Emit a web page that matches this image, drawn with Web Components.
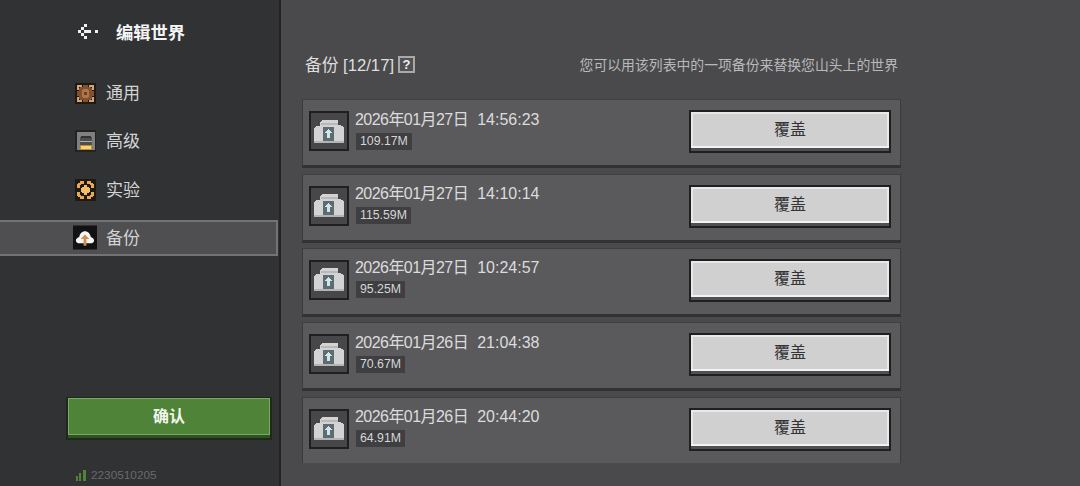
<!DOCTYPE html>
<html lang="zh">
<head>
<meta charset="utf-8">
<title>编辑世界</title>
<style>
    html, body { margin: 0; height: 100%; background: #4a4a4c; overflow: hidden; }
    body { font-family: "Liberation Sans", "Noto Sans CJK SC", sans-serif; }
</style>
</head>
<body>

<template id="icon-general">
    <svg width="21" height="21" viewBox="0 0 21 21" shape-rendering="crispEdges">
        <rect width="21" height="21" fill="#1d1915"/>
        <path d="M8 2h5v2h3v1h1v3h2v5h-2v3h-1v1h-3v2H8v-2H5v-1H4v-3H2V8h2V5h1V4h3z" fill="#84502d"/>
        <path d="M2 2h5v2H4v3H2zM14 2h5v5h-2V4h-3zM2 14h2v3h3v2H2zM17 14h2v5h-5v-2h3z" fill="#d2a476"/>
        <path d="M8 6h5v1h1v7h-1v1H8v-1H7V7h1z" fill="#ad784d"/>
        <rect x="9" y="9" width="3" height="3" fill="#6b3f24"/>
    </svg>
</template>
<template id="icon-advanced">
    <svg width="21" height="22" viewBox="0 0 21 22" shape-rendering="crispEdges">
        <rect width="21" height="22" fill="#232323"/>
        <rect x="2" y="2" width="18" height="18" fill="#808080"/>
        <path d="M6 6h10v1h1v12H5V7h1z" fill="#4e4e4e"/>
        <rect x="6" y="6" width="10" height="2" fill="#333"/>
        <rect x="5" y="11" width="12" height="1" fill="#b0b0b0"/>
        <rect x="5" y="15" width="12" height="5" fill="#c08c38"/>
        <rect x="6" y="16" width="10" height="3" fill="#f5d56e"/>
    </svg>
</template>
<template id="icon-experiment">
    <svg width="21" height="22" viewBox="0 0 21 22" shape-rendering="crispEdges">
        <rect width="21" height="22" fill="#1d1914"/>
        <path d="M5 2h4v3H6v1H5v3H2V5h1V4h2zM12 2h4v2h2v1h1v4h-3V6h-1V5h-3zM2 13h3v3h1v1h3v3H5v-2H3v-1H2zM16 13h3v4h-1v1h-2v2h-4v-3h3v-1h1z" fill="#eaa850"/>
        <path d="M9 6h3v2h2v1h1v4h-1v1h-2v2H9v-2H7v-1H6V9h1V8h2z" fill="#f6bb66"/>
    </svg>
</template>
<template id="icon-backup">
    <svg width="25" height="25" viewBox="0 0 25 25">
        <rect width="25" height="25" fill="#121212"/>
        <path d="M3 15.500c0-1.500 2-3 3.500-3.500C7 8.500 9.500 6 12.500 6s5.500 2.500 6 6c1.500.5 3.500 2 3.500 3.500 0 2-2 3-4 3H7c-2 0-4-1-4-3z" fill="#f6f6f6"/>
        <path d="M12.500 9.500l4.500 4.500h-3v7h-3v-7H8z" fill="#d08f4a"/>
    </svg>
</template>
<template id="icon-chest">
    <svg width="30" height="23" viewBox="0 0 30 23" shape-rendering="crispEdges">
        <path d="M6 2h1V1h1V0h16v5h3v1h2v1h1v16H0V8h1V7h1V6h4z" fill="#d3d3d3"/>
        <rect x="0" y="21" width="30" height="2" fill="#b4b4b4"/>
        <rect x="7" y="3" width="17" height="2" fill="#b8b8b8"/>
        <rect x="9" y="7" width="11" height="14" fill="#5b6c72"/>
        <path d="M14.500 9l3.500 4h-2v5h-3v-5h-2z" fill="#d5e5e7"/>
    </svg>
</template>

<script>
// little helper, every element gets its shadow root the same way
function shadow(el, html) {
    el.attachShadow({ mode: 'open' });
    el.shadowRoot.innerHTML = html;
}

class NavItem extends HTMLElement {
    connectedCallback() {
        shadow(this, `
            <style>
                :host { display: flex; align-items: center; height: 36px; box-sizing: border-box; padding-left: 73px; gap: 9px;
                        font-size: 17px; color: #d4d4d4; }
                :host([active]) { background: #4f4f51; border: 2px solid #737375; border-left: 0; width: 278px; }
                .icon { width: 24px; display: flex; justify-content: center; flex: none; }
                .label { line-height: 20px; padding-top: 2px; }
                svg { display: block; }
            </style>
            <span class="icon"></span><span class="label"><slot></slot></span>
        `);
        const tpl = document.getElementById(this.getAttribute('icon'));
        this.shadowRoot.querySelector('.icon').append(tpl.content.cloneNode(true));
    }
}
customElements.define('nav-item', NavItem);

class GreenButton extends HTMLElement {
    constructor() {
        super();
        shadow(this, `
            <style>
                :host { display: flex; align-items: center; justify-content: center; box-sizing: border-box; height: 43px;
                        margin-left: 66px; width: 206px; background: #4f8337;
                        border: 2px solid #1c2a17; border-top-width: 1px;
                        box-shadow: inset 0 -3px 0 #2f5224, inset 0 -4px 0 #7ea76a, inset 1px 1px 0 #7ea76a, inset -1px 0 0 #7ea76a;
                        padding-bottom: 6px; font-size: 16px; font-weight: 700; color: #f2f5ee; }
            </style>
            <slot></slot>
        `);
    }
}
customElements.define('green-button', GreenButton);

class SideBar extends HTMLElement {
    constructor() {
        super();
        shadow(this, `
            <style>
                :host { display: flex; flex-direction: column; flex: none; width: 279px; height: 486px; box-sizing: content-box;
                        background: #313234; border-right: 2px solid #232325; }
                .title { display: flex; align-items: center; height: 63px; padding-left: 78px; gap: 18px;
                         font-size: 17.300px; font-weight: 700; color: #f4f4f4; }
                svg { display: block; }
                nav { display: flex; flex-direction: column; gap: 12.300px; margin-top: 12px; }
                .bottom { margin-top: auto; }
                .ver { display: flex; align-items: center; gap: 5px; height: 13px; margin: 29px 0 4px; padding-left: 75px;
                       font-size: 11.800px; color: #69696c; line-height: 13px; }
            </style>
            <div class="title">
                <svg width="20" height="15" viewBox="0 0 20 15" shape-rendering="crispEdges" fill="#f0f0f0">
                    <path d="M6 0h3v3H6zM3 3h3v3H3zM0 6h3v3H0zM3 9h3v3H3zM6 12h3v3H6zM6 6h7v3H6z"/><rect x="17" y="6" width="3" height="3"/>
                </svg>
                <span>编辑世界</span>
            </div>
            <nav><slot name="nav"></slot></nav>
            <div class="bottom">
                <slot name="confirm"></slot>
                <div class="ver">
                    <svg width="11" height="11" viewBox="0 0 11 11" fill="#4f8337" shape-rendering="crispEdges"><rect x="1" y="6" width="2" height="5"/><rect x="4" y="3" width="2" height="8"/><rect x="8" y="0" width="3" height="11"/></svg>
                    <slot name="version"></slot>
                </div>
            </div>
        `);
    }
}
customElements.define('side-bar', SideBar);

class BackupRow extends HTMLElement {
    connectedCallback() {
        shadow(this, `
            <style>
                :host { display: flex; align-items: flex-start; flex: none; box-sizing: border-box; height: 69px; padding: 11px 9px 0 6px;
                        background: #5a5a5c; border: 1px solid #3a3a3c; border-top-color: #3f3f41; border-bottom: 3px solid #323234; }
                .thumb { flex: none; width: 40px; height: 40px; box-sizing: border-box; background: #47474a; border: 2px solid #1f1f21;
                         display: flex; align-items: center; justify-content: center; }
                svg { display: block; }
                .info { flex: 1; margin-left: 6px; margin-top: -1.700px; color: #dcdcdc; }
                .stamp { display: flex; gap: 9px; font-size: 16px; line-height: 20px; white-space: pre; }
                .date { letter-spacing: -0.55px; }
                .size { display: inline-block; margin-top: 3px; margin-left: 1px; padding: 0 4px; height: 17px; line-height: 17px;
                        background: #3f3f41; font-size: 12.300px; color: #d6d6d6; }
                .btn { flex: none; width: 202px; height: 43px; margin-top: -1px; box-sizing: border-box; background: #d0d0d0;
                       border: 2px solid #1f1f21;
                       box-shadow: inset 0 -3px 0 #505052, inset 0 -5px 0 #f2f2f2, inset 2px 2px 0 #e8e8e8, inset -2px 0 0 #e8e8e8;
                       display: flex; align-items: center; justify-content: center; padding-bottom: 7px;
                       font-size: 16px; color: #333335; }
            </style>
            <div class="thumb"></div>
            <div class="info">
                <div class="stamp"><span class="date">${this.getAttribute('date')}</span><span>${this.getAttribute('time')}</span></div>
                <span class="size">${this.getAttribute('size')}</span>
            </div>
            <div class="btn"><slot></slot></div>
        `);
        this.shadowRoot.querySelector('.thumb').append(document.getElementById('icon-chest').content.cloneNode(true));
    }
}
customElements.define('backup-row', BackupRow);

class BackupPanel extends HTMLElement {
    constructor() {
        super();
        shadow(this, `
            <style>
                :host { display: flex; flex-direction: column; flex: 1; min-width: 0; height: 486px; background: #4a4a4c; padding-left: 21px; box-sizing: border-box; }
                header { display: flex; align-items: center; justify-content: space-between; width: 593px; margin-left: 3px; height: 99.200px; padding-top: 31px; padding-bottom: 2px; box-sizing: border-box; }
                .head { display: flex; align-items: center; gap: 4px; font-size: 16.700px; color: #dedede; }
                .help { width: 17px; height: 17px; box-sizing: border-box; border: 2px solid #a9a9a9; display: flex; align-items: center; justify-content: center;
                        font-size: 13px; font-weight: 700; color: #eee; line-height: 1; background: #525255; }
                .note { font-size: 13.850px; color: #b9b9bb; }
                .list { display: flex; flex-direction: column; gap: 5.400px; width: 599px; height: 363.800px; overflow: hidden; }
            </style>
            <header>
                <div class="head"><span>备份 [12/17]</span><span class="help">?</span></div>
                <div class="note">您可以用该列表中的一项备份来替换您山头上的世界</div>
            </header>
            <div class="list"><slot></slot></div>
        `);
    }
}
customElements.define('backup-panel', BackupPanel);

class WorldScreen extends HTMLElement {
    constructor() {
        super();
        shadow(this, `
            <style>
                :host { display: flex; width: 1080px; height: 486px; overflow: hidden; }
            </style>
            <slot></slot>
        `);
    }
}
customElements.define('world-screen', WorldScreen);
</script>

<world-screen>
    <side-bar>
        <nav-item slot="nav" icon="icon-general">通用</nav-item>
        <nav-item slot="nav" icon="icon-advanced">高级</nav-item>
        <nav-item slot="nav" icon="icon-experiment">实验</nav-item>
        <nav-item slot="nav" icon="icon-backup" active>备份</nav-item>
        <green-button slot="confirm">确认</green-button>
        <span slot="version">2230510205</span>
    </side-bar>
    <backup-panel>
        <backup-row date="2026年01月27日" time="14:56:23" size="109.17M">覆盖</backup-row>
        <backup-row date="2026年01月27日" time="14:10:14" size="115.59M">覆盖</backup-row>
        <backup-row date="2026年01月27日" time="10:24:57" size="95.25M">覆盖</backup-row>
        <backup-row date="2026年01月26日" time="21:04:38" size="70.67M">覆盖</backup-row>
        <backup-row date="2026年01月26日" time="20:44:20" size="64.91M">覆盖</backup-row>
    </backup-panel>
</world-screen>

</body>
</html>
